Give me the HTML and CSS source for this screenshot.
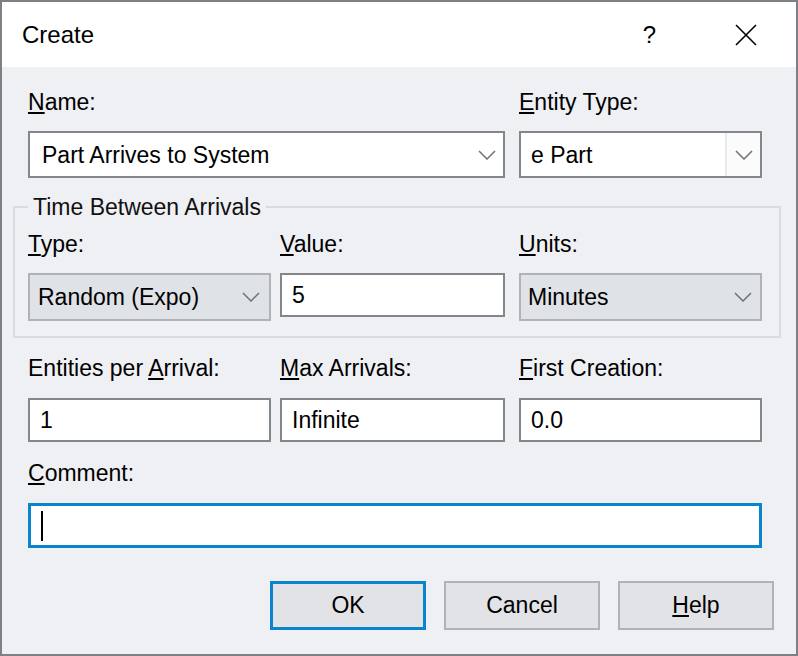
FILE: index.html
```html
<!DOCTYPE html>
<html>
<head>
<meta charset="utf-8">
<link rel="stylesheet" href="styles.css">
</head>
<body>
<div class="dialog">
  <div class="titlebar">
    <span class="title">Create</span>
    <span class="qmark">?</span>
    <span class="close"><svg width="22" height="22" viewBox="0 0 22 22"><path d="M1 1 L21 21 M21 1 L1 21" stroke="#000" stroke-width="1.6" fill="none"/></svg></span>
  </div>
  <div class="content">
    <div class="grid">
      <label class="lbl c-12"><u>N</u>ame:</label>
      <label class="lbl c-3"><u>E</u>ntity Type:</label>
      <div class="box combo name-combo c-12"><span class="txt">Part Arrives to System</span><svg class="chev" width="18" height="10" viewBox="0 0 18 10"><path d="M1 1 L9 9 L17 1" stroke="#6e7277" stroke-width="1.5" fill="none"/></svg></div>
      <div class="box combo split c-3"><span class="txt">e Part</span><span class="drop"><svg class="chev" width="18" height="10" viewBox="0 0 18 10"><path d="M1 1 L9 9 L17 1" stroke="#6e7277" stroke-width="1.5" fill="none"/></svg></span></div>
    </div>

    <fieldset class="group">
      <legend>Time Between Arrivals</legend>
      <div class="grid">
        <label class="lbl c-1"><u>T</u>ype:</label>
        <label class="lbl c-2"><u>V</u>alue:</label>
        <label class="lbl c-3"><u>U</u>nits:</label>
        <div class="box combo dis type-combo c-1"><span class="txt">Random (Expo)</span><svg class="chev" width="18" height="10" viewBox="0 0 18 10"><path d="M1 1 L9 9 L17 1" stroke="#6e7277" stroke-width="1.5" fill="none"/></svg></div>
        <div class="box field value-field c-2"><span class="txt">5</span></div>
        <div class="box combo dis units-combo c-3"><span class="txt">Minutes</span><svg class="chev" width="18" height="10" viewBox="0 0 18 10"><path d="M1 1 L9 9 L17 1" stroke="#6e7277" stroke-width="1.5" fill="none"/></svg></div>
      </div>
    </fieldset>

    <div class="grid row3">
      <label class="lbl c-1">Entities per <u>A</u>rrival:</label>
      <label class="lbl c-2"><u>M</u>ax Arrivals:</label>
      <label class="lbl c-3"><u>F</u>irst Creation:</label>
      <div class="box field small c-1"><span class="txt">1</span></div>
      <div class="box field small c-2"><span class="txt">Infinite</span></div>
      <div class="box field small c-3"><span class="txt">0.0</span></div>
    </div>

    <label class="lbl comment-lbl"><u>C</u>omment:</label>
    <div class="box comment"><span class="caret"></span></div>

    <div class="buttons">
      <button class="btn default">OK</button>
      <button class="btn">Cancel</button>
      <button class="btn"><u>H</u>elp</button>
    </div>
  </div>
</div>
</body>
</html>
```

FILE: styles.css
```css
* { box-sizing: border-box; }
html, body { margin: 0; padding: 0; }
body {
  font-family: "Liberation Sans", Arial, sans-serif;
  font-size: 23px;
  color: #000;
  background: #ffffff;
}
.dialog {
  width: 798px;
  height: 656px;
  border: 2px solid #7d8186;
  background: #eff0f4;
  display: flex;
  flex-direction: column;
}
.titlebar {
  height: 65px;
  background: #ffffff;
  display: flex;
  align-items: center;
  padding: 0 39px 0 20px;
  flex-shrink: 0;
}
.title {
  flex: 1;
  font-size: 24px;
  line-height: 28px;
}
.qmark {
  font-size: 24px;
  line-height: 28px;
  margin-right: 79px;
}
.close { display: flex; }
.content {
  padding: 22px 34px 0 26px;
  flex: 1;
}
u {
  text-decoration: underline;
  text-decoration-thickness: 2px;
  text-underline-offset: 2px;
}
.grid {
  display: grid;
  grid-template-columns: 243px 9px 225px 14px 243px;
}
.c-1 { grid-column: 1; }
.c-2 { grid-column: 3; }
.c-3 { grid-column: 5; }
.c-12 { grid-column: 1 / 4; }
.lbl {
  display: block;
  line-height: 26px;
  height: 26px;
  white-space: nowrap;
  margin-bottom: 16px;
}
.box {
  display: flex;
  align-items: center;
  border: 2px solid #82878c;
  background: #ffffff;
  line-height: 26px;
  white-space: nowrap;
}
.txt { flex: 1; }
.combo { height: 47px; }
.name-combo { padding: 0 7px 0 12px; }
.split { padding: 0 0 0 10px; }
.split .drop {
  align-self: stretch;
  width: 35px;
  border-left: 2px solid #e7e9ec;
  background: #fbfbfc;
  display: flex;
  align-items: center;
  justify-content: center;
}
.dis {
  height: 48px;
  background: #dfe2e6;
  border-color: #afb3b8;
}
.type-combo { padding: 0 9px 0 8px; }
.units-combo { padding: 0 8px 0 7px; }
.field { height: 44px; padding-left: 10px; }

.group {
  margin: 16px -19px 0 -15px;
  padding: 11px 17px 15px 13px;
  border: 2px solid #d9dbdf;
  min-width: 0;
}
.group legend {
  padding: 0 5px;
  line-height: 26px;
  color: #111;
}
.row3 { margin-top: 17px; }
.row3 .lbl { margin-bottom: 17px; }
.comment-lbl { margin-top: 18px; margin-bottom: 17px; }
.comment {
  height: 45px;
  border: 3px solid #0a84cc;
  padding-left: 10px;
}
.caret {
  width: 2px;
  height: 30px;
  background: #000;
}
.buttons {
  display: flex;
  justify-content: flex-end;
  gap: 18px;
  margin-top: 33px;
  margin-right: -12px;
}
.btn {
  width: 156px;
  height: 49px;
  background: #e1e3e7;
  border: 2px solid #afb3b8;
  font-family: "Liberation Sans", Arial, sans-serif;
  font-size: 23px;
  color: #000;
  padding: 0;
  border-radius: 0;
}
.btn.default { border: 3px solid #0a84cc; }
```
